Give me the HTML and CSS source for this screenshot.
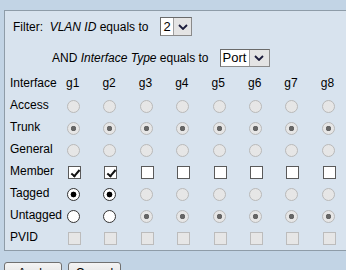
FILE: index.html
```html
<!DOCTYPE html>
<html lang="en">
  <head>
    <meta charset="UTF-8" />
    <title>Port to VLAN</title>
    <link rel="stylesheet" href="styles.css">
  </head>
  <body>
    <div class="panel">
      <div class="filter-row">
        <span>Filter:&nbsp; <i>VLAN ID</i> equals to</span>
        <div class="select sel-vlan">
          <span class="value">2</span>
          <span class="arrow"><svg width="10" height="6" viewBox="0 0 10 6"><path d="M1 1 L5 5 L9 1" fill="none" stroke="#1b1b3a" stroke-width="1.8"/></svg></span>
        </div>
      </div>
      <div class="filter-row second">
        <span>AND <i>Interface Type</i> equals to</span>
        <div class="select sel-type">
          <span class="value">Port</span>
          <span class="arrow"><svg width="10" height="6" viewBox="0 0 10 6"><path d="M1 1 L5 5 L9 1" fill="none" stroke="#1b1b3a" stroke-width="1.8"/></svg></span>
        </div>
      </div>
      <div class="ports" id="ports"></div>
    </div>
    <div class="actions">
      <button>Apply</button>
      <button>Cancel</button>
    </div>
    <script>
      const ports = document.getElementById("ports");
      // each row: label, then a function giving the control class for port i
      const rows = [
        ["Access", () => "radio off"],
        ["Trunk", () => "radio off on"],
        ["General", () => "radio off"],
        ["Member", (i) => (i < 2 ? "check on" : "check")],
        ["Tagged", (i) => (i < 2 ? "radio on" : "radio off")],
        ["Untagged", (i) => (i < 2 ? "radio" : "radio off on")],
        ["PVID", () => "check off"],
      ];
      let html = `<div class="label">Interface</div>`;
      for (let i = 1; i <= 8; i++) {
        html += `<div class="label">g${i}</div>`;
      }
      rows.forEach(([label, cls]) => {
        html += `<div class="label">${label}</div>`;
        for (let i = 0; i < 8; i++) {
          html += `<div class="cell"><span class="${cls(i)}"></span></div>`;
        }
      });
      ports.innerHTML = html;
    </script>
  </body>
</html>
```

FILE: styles.css
```css
body {
  margin: 0;
  padding: 0;
  height: 270px;
  overflow: hidden;
  background-color: #c2d4e5;
  font-family: "Liberation Sans", Arial, sans-serif;
  font-size: 12px;
  color: #000;
}
.panel {
  width: 380px;
  margin: 10px 0 0 4px;
  padding-bottom: 2px;
  background-color: #d8e3ee;
  border: 1px solid #8e9ca8;
  border-right: none;
}
.filter-row {
  display: flex;
  align-items: center;
  gap: 12px;
  padding: 6px 0 0 8px;
}
.filter-row.second {
  gap: 11px;
  padding: 13px 0 0 47px;
}
.select {
  display: flex;
  height: 19px;
  box-sizing: border-box;
  background: #fff;
  border: 1px solid #8a8a8a;
  border-top-color: #6a6a6a;
  border-left-color: #6a6a6a;
}
.sel-vlan {
  width: 32px;
}
.sel-type {
  width: 50px;
  height: 18px;
}
.select .value {
  flex: 1;
  padding-left: 2px;
  line-height: 17px;
  font-size: 13px;
}
.sel-type .value {
  line-height: 16px;
}
.select .arrow {
  width: 17px;
  display: flex;
  align-items: center;
  justify-content: center;
  background: #e4e4e4;
  border-left: 1px solid #a0a0a0;
}
.sel-type .arrow {
  width: 19px;
}
.ports {
  display: grid;
  grid-template-columns: 56px repeat(8, 36.4px);
  grid-auto-rows: 22px;
  padding: 5px 0 0 5px;
}
.label {
  line-height: 22px;
  white-space: nowrap;
}
.cell {
  position: relative;
}
.radio,
.check {
  display: block;
  box-sizing: border-box;
  width: 13px;
  height: 13px;
  margin: 6px 0 0 1px;
  background: #fff;
  border: 1px solid #333;
}
.radio {
  border-radius: 50%;
}
.radio.on {
  background: radial-gradient(circle, #000 0 2.6px, #fff 3.2px);
}
.radio.off {
  background: #e6e6e6;
  border-color: #b9b9b9;
}
.radio.off.on {
  background: radial-gradient(circle, #666 0 2.4px, #e6e6e6 3px);
}
.check {
  position: relative;
  margin-left: 2px;
  border-color: #5a5a5a;
}
.check.on::after {
  content: "";
  position: absolute;
  left: 4px;
  top: 1px;
  width: 3px;
  height: 7px;
  border-right: 2px solid #111;
  border-bottom: 2px solid #111;
  transform: rotate(40deg);
}
.check.off {
  background: #e6e6e6;
  border-color: #bcbcbc;
}
.actions {
  display: flex;
  gap: 6px;
  margin: 11px 0 0 4px;
}
.actions button {
  height: 22px;
  padding: 0;
  font-family: "Liberation Sans", Arial, sans-serif;
  font-size: 12px;
  color: #000;
  background: linear-gradient(#f4f4f4, #dcdcdc);
  border: 1px solid #707070;
  border-radius: 3px;
}
.actions button:first-child {
  width: 58px;
}
.actions button:last-child {
  width: 53px;
}
```
